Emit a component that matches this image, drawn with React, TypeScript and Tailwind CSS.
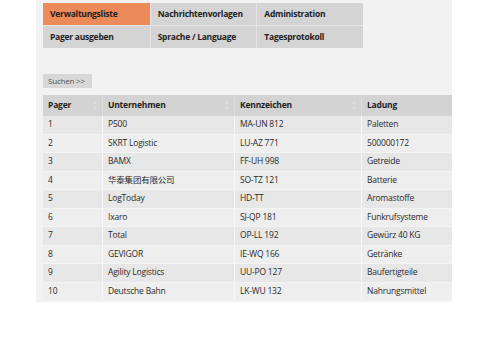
const tabs = [
  ['Verwaltungsliste', 'Nachrichtenvorlagen', 'Administration'],
  ['Pager ausgeben', 'Sprache / Language', 'Tagesprotokoll'],
]

const rows = [
  ['1', 'P500', 'MA-UN 812', 'Paletten'],
  ['2', 'SKRT Logistic', 'LU-AZ 771', '500000172'],
  ['3', 'BAMX', 'FF-UH 998', 'Getreide'],
  ['4', '华泰集团有限公司', 'SO-TZ 121', 'Batterie'],
  ['5', 'LogToday', 'HD-TT', 'Aromastoffe'],
  ['6', 'Ixaro', 'SJ-QP 181', 'Funkrufsysteme'],
  ['7', 'Total', 'OP-LL 192', 'Gewürz 40 KG'],
  ['8', 'GEVIGOR', 'IE-WQ 166', 'Getränke'],
  ['9', 'Agility Logistics', 'UU-PO 127', 'Baufertigteile'],
  ['10', 'Deutsche Bahn', 'LK-WU 132', 'Nahrungsmittel'],
]

const cols = ['w-[59px]', 'w-[132px]', 'w-[127px]', 'flex-1']

function SortIcon() {
  return (
    <svg width="6" height="11" viewBox="0 0 6 11" className="ml-auto mr-[4px]">
      <path d="M3 0.5 L5.5 4 H0.5 Z" fill="#dcdcdc" />
      <path d="M3 10.5 L5.5 7 H0.5 Z" fill="#dcdcdc" />
    </svg>
  )
}

export default function App() {
  return (
    <div
      className="w-[490px] h-[349px] bg-white"
      style={{ fontFamily: '"Open Sans", "Noto Sans CJK SC", sans-serif' }}
    >
      <div className="ml-[36px] w-[416px] h-[302px] bg-[#f2f2f2] pt-[3px] pl-[7px]">
        {/* Menu */}
        <div className="w-[320px]">
          {tabs.map((row, r) => (
            <div key={r} className={`flex ${r === 0 ? 'border-b border-[#e6e6e6]' : ''}`}>
              {row.map((t, i) => (
                <div
                  key={t}
                  className={`h-[22px] w-[107px] flex items-center pl-[7px] text-[8.5px] tracking-[-0.25px] font-bold text-[#222] ${
                    i > 0 ? 'border-l border-[#e4e4e4]' : ''
                  } ${r === 0 && i === 0 ? 'bg-[#ec8a5a]' : 'bg-[#d4d4d4]'}`}
                >
                  {t}
                </div>
              ))}
            </div>
          ))}
        </div>

        {/* Search */}
        <div className="mt-[26px] w-[49px] h-[14px] bg-[#d8d8d8] flex items-center pl-[5px] text-[8px] tracking-[-0.2px] text-[#555]">
          Suchen &gt;&gt;
        </div>

        {/* Table */}
        <div className="mt-[7px] w-[409px] text-[8.5px] tracking-[-0.2px] text-[#2a2a2a]">
          <div className="flex h-[21px] bg-[#d3d3d3] font-bold text-[#1f1f1f]">
            {['Pager', 'Unternehmen', 'Kennzeichen', 'Ladung'].map((h, i) => (
              <div
                key={h}
                className={`${cols[i]} flex items-center pl-[5px] ${i > 0 ? 'border-l border-[#dcdcdc]' : ''}`}
              >
                {h}
                {i < 3 && <SortIcon />}
              </div>
            ))}
          </div>
          {rows.map((row, r) => (
            <div
              key={r}
              className={`flex h-[18.5px] border-b border-[#f4f4f4] ${r % 2 === 0 ? 'bg-[#e7e7e7]' : 'bg-[#eeeeee]'}`}
            >
              {row.map((c, i) => (
                <div
                  key={i}
                  className={`${cols[i]} flex items-center pl-[5px] ${i > 0 ? 'border-l border-[#f8f8f8]' : ''}`}
                >
                  {c}
                </div>
              ))}
            </div>
          ))}
        </div>
      </div>
    </div>
  )
}
